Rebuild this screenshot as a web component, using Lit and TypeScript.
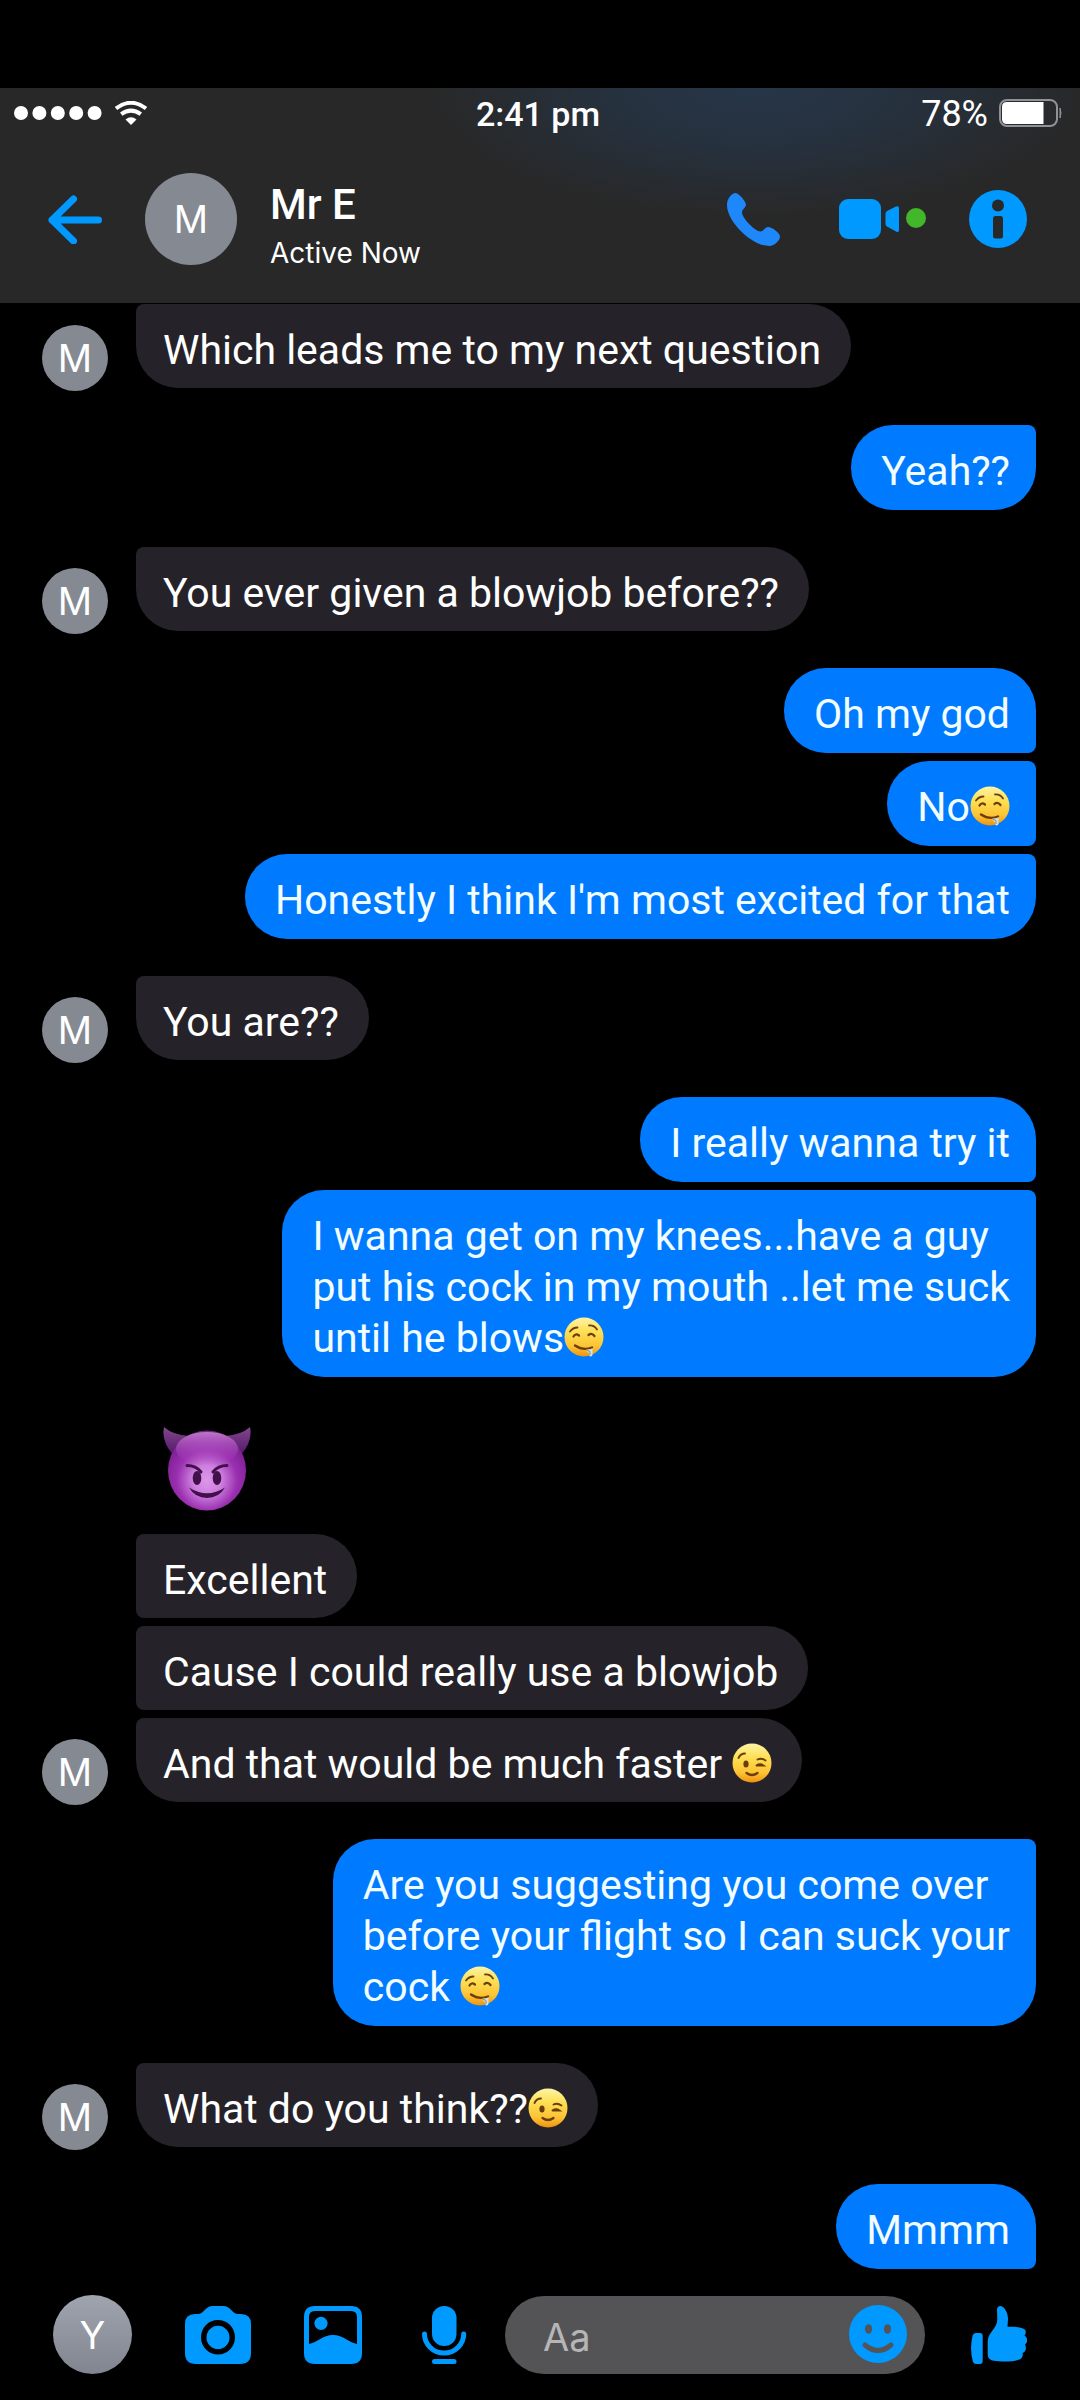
import { LitElement, html, css, svg, nothing, type TemplateResult } from "lit";
import { customElement, property } from "lit/decorators.js";
import { classMap } from "lit/directives/class-map.js";

type Part = string | { emoji: "drool" | "wink" | "devil" };
interface Message {
  lines: Part[][];
  shape?: "first" | "middle" | "last" | "bare";
}
interface Group {
  from: "them" | "me";
  messages: Message[];
}

const drool: Part = { emoji: "drool" };
const wink: Part = { emoji: "wink" };

const conversation: Group[] = [
  { from: "them", messages: [{ lines: [["Which leads me to my next question"]], shape: "last" }] },
  { from: "me", messages: [{ lines: [["Yeah??"]], shape: "last" }] },
  { from: "them", messages: [{ lines: [["You ever given a blowjob before??"]], shape: "last" }] },
  {
    from: "me",
    messages: [
      { lines: [["Oh my god"]], shape: "first" },
      { lines: [["No", drool]], shape: "middle" },
      { lines: [["Honestly I think I'm most excited for that"]], shape: "last" },
    ],
  },
  { from: "them", messages: [{ lines: [["You are??"]], shape: "last" }] },
  {
    from: "me",
    messages: [
      { lines: [["I really wanna try it"]], shape: "first" },
      {
        lines: [
          ["I wanna get on my knees...have a guy"],
          ["put his cock in my mouth ..let me suck"],
          ["until he blows", drool],
        ],
        shape: "last",
      },
    ],
  },
  {
    from: "them",
    messages: [
      { lines: [[{ emoji: "devil" }]], shape: "bare" },
      { lines: [["Excellent"]], shape: "middle" },
      { lines: [["Cause I could really use a blowjob"]], shape: "middle" },
      { lines: [["And that would be much faster ", wink]], shape: "last" },
    ],
  },
  {
    from: "me",
    messages: [
      {
        lines: [
          ["Are you suggesting you come over"],
          ["before your flight so I can suck your"],
          ["cock ", drool],
        ],
        shape: "last",
      },
    ],
  },
  { from: "them", messages: [{ lines: [["What do you think??", wink]], shape: "last" }] },
  { from: "me", messages: [{ lines: [["Mmmm"]], shape: "first" }] },
];

const faceGradient = svg`
  <defs>
    <linearGradient id="face" x1="0" y1="0" x2="0" y2="1">
      <stop offset="0" stop-color="#fff3a6" />
      <stop offset="0.35" stop-color="#fde055" />
      <stop offset="0.75" stop-color="#fcc233" />
      <stop offset="1" stop-color="#ee930f" />
    </linearGradient>
  </defs>
  <circle cx="20" cy="20" r="19.5" fill="url(#face)" />`;

const droolFace = html`<svg class="emoji" viewBox="0 0 40 40" role="img" aria-label="Drooling face">
  ${faceGradient}
  <g fill="none" stroke="#6b3d0c" stroke-width="1.8" stroke-linecap="round">
    <path d="M6 14.5Q9 10.5 13.5 10.5" />
    <path d="M25 8.5Q30 8 33 12.5" />
    <path d="M9.5 19.5Q11.5 16 15 18.5" stroke-width="2.2" />
    <path d="M24.5 18Q28 15.5 30.5 19" stroke-width="2.2" />
    <path d="M11 28.5Q19 34 28 30.5" stroke-width="2.4" />
  </g>
  <path d="M22.5 32.5Q27 33 28.5 31V37.5Q28.5 39.5 26.5 39.5Q25 39.5 25.2 36.5Q23 35 22.5 32.5Z" fill="#d3e3e4" />
  <path d="M23 33.2L26 34.5V38" fill="none" stroke="#7f8c83" stroke-width="1" />
</svg>`;

const winkFace = html`<svg class="emoji" viewBox="0 0 40 40" role="img" aria-label="Winking face">
  ${faceGradient}
  <g fill="none" stroke="#6b3d0c" stroke-width="1.9" stroke-linecap="round">
    <path d="M6.5 15Q8.5 10.5 13 10.5" />
    <path d="M25.5 16.5Q29.5 14.5 33.5 17.5" />
    <path d="M24.5 22.5Q28 20 31.5 22.5H25.5" />
    <path d="M14.5 30Q20 34 25.5 30" stroke-width="2.3" />
  </g>
  <ellipse cx="14" cy="21" rx="2.6" ry="3.5" fill="#6b3d0c" />
</svg>`;

const devilFace = html`<svg class="devil" viewBox="0 0 88 84" role="img" aria-label="Smiling face with horns">
  <defs>
    <radialGradient id="devil-skin" cx="0.5" cy="0.62" r="0.62">
      <stop offset="0" stop-color="#dc97ea" />
      <stop offset="0.3" stop-color="#ce80df" />
      <stop offset="0.62" stop-color="#9a30b0" />
      <stop offset="0.85" stop-color="#85239b" />
      <stop offset="1" stop-color="#6c2a7c" />
    </radialGradient>
    <linearGradient id="devil-shine" x1="0" y1="0" x2="0" y2="1">
      <stop offset="0" stop-color="#bd74cb" />
      <stop offset="1" stop-color="#a238b8" stop-opacity="0" />
    </linearGradient>
    <linearGradient id="horn" x1="0" y1="0" x2="0" y2="1">
      <stop offset="0" stop-color="#81478c" />
      <stop offset="1" stop-color="#55166a" />
    </linearGradient>
  </defs>
  <path d="M1 0Q10 8 26 9L10 28Q-2 14 1 0ZM87 0Q78 8 62 9L78 28Q90 14 87 0Z" fill="url(#horn)" />
  <ellipse cx="44" cy="43.5" rx="39" ry="40" fill="url(#devil-skin)" />
  <ellipse cx="44" cy="22" rx="31" ry="17" fill="url(#devil-shine)" />
  <g fill="none" stroke="#43104b" stroke-linecap="round">
    <path d="M24 38.5Q33 38.5 38 45" stroke-width="3" />
    <path d="M64 38.5Q55 38.5 50 45" stroke-width="3" />
  </g>
  <ellipse cx="34" cy="51" rx="4.3" ry="7" fill="#43104b" />
  <ellipse cx="54" cy="51" rx="4.3" ry="7" fill="#43104b" />
  <path d="M26 60.5Q44 72 62 60.5Q56 71 44 71Q32 71 26 60.5Z" fill="#43104b" />
</svg>`;

const emojiArt: Record<string, TemplateResult> = { drool: droolFace, wink: winkFace, devil: devilFace };

@customElement("chat-avatar")
export class ChatAvatar extends LitElement {
  static styles = css`
    :host {
      display: flex;
      flex: none;
      align-items: center;
      justify-content: center;
      border-radius: 50%;
      background: #858992;
      color: #fff;
      font: 400 38px/44px Inter, "Liberation Sans", sans-serif;
    }
  `;
  @property() initial = "";
  render() {
    return html`<span>${this.initial}</span>`;
  }
}

@customElement("chat-bubble")
export class ChatBubble extends LitElement {
  static styles = css`
    :host {
      display: block;
    }
    .bubble {
      box-sizing: border-box;
      width: fit-content;
      border-radius: 42px;
      font: 400 41px/50px Roboto, "Liberation Sans", sans-serif;
      white-space: nowrap;
    }
    .line {
      display: block;
      white-space: pre;
    }
    .them {
      padding: 21px 30px 13px 27px;
      background: #252329;
      color: #fff;
    }
    .me {
      padding: 21px 26px 13px 30px;
      background: #007aff;
      color: #f2fdff;
      line-height: 51px;
    }
    .them.last { border-top-left-radius: 8px; }
    .them.middle { border-top-left-radius: 8px; border-bottom-left-radius: 8px; }
    .me.last { border-top-right-radius: 8px; }
    .me.middle { border-top-right-radius: 8px; border-bottom-right-radius: 8px; }
    .me.first { border-bottom-right-radius: 8px; }
    .them.bare {
      padding: 13px 27px 15px;
      background: none;
    }
    .emoji {
      width: 40px;
      height: 40px;
      vertical-align: -5px;
    }
    .devil {
      display: block;
      width: 88px;
      height: 84px;
    }
  `;
  @property() from: "them" | "me" = "them";
  @property({ attribute: false }) message: Message = { lines: [] };
  render() {
    const classes = { bubble: true, [this.from]: true, [this.message.shape ?? "last"]: true };
    return html`<div class=${classMap(classes)}>${this.message.lines.map(
      (line) => html`<span class="line">${line.map((p) => (typeof p === "string" ? p : emojiArt[p.emoji]))}</span>`
    )}</div>`;
  }
}

@customElement("chat-header")
export class ChatHeader extends LitElement {
  static styles = css`
    :host {
      display: block;
      background:
        radial-gradient(ellipse 330px 130px at 70% 0, #263648 0%, #26313e 45%, rgba(40, 40, 40, 0) 100%),
        #282828;
      color: #fff;
      font-family: Roboto, "Liberation Sans", sans-serif;
    }
    .status {
      display: grid;
      grid-template-columns: 1fr auto 1fr;
      align-items: center;
      height: 50px;
      padding: 0 18px 0 14px;
      font-size: 36px;
      line-height: 42px;
    }
    .signal {
      display: flex;
      align-items: center;
      gap: 13px;
    }
    .dots {
      width: 88px;
      height: 14px;
    }
    .wifi {
      width: 32px;
      height: 24px;
    }
    .time {
      padding-top: 2px;
      font-size: 34px;
      font-weight: 500;
    }
    .power {
      display: flex;
      align-items: center;
      justify-content: flex-end;
      gap: 11px;
    }
    .percent {
      padding-top: 2px;
    }
    .battery {
      width: 63px;
      height: 28px;
    }
    .bar {
      display: flex;
      align-items: center;
      height: 162px;
      padding: 0 53px 3px 48px;
    }
    button {
      display: block;
      flex: none;
      margin: 0;
      padding: 0;
      border: 0;
      background: none;
    }
    svg {
      display: block;
    }
    .arrow {
      width: 54px;
      height: 50px;
    }
    .avatar {
      width: 92px;
      height: 92px;
      margin: 0 33px 0 43px;
    }
    .who {
      flex: 1;
      min-width: 0;
      padding-top: 16px;
    }
    .name {
      margin: 0;
      font-size: 42px;
      font-weight: 500;
      line-height: 52px;
    }
    .presence {
      margin: 0;
      font-family: Inter, "Liberation Sans", sans-serif;
      font-size: 28px;
      line-height: 44px;
    }
    .actions {
      display: flex;
      align-items: center;
    }
    .phone {
      width: 53px;
      height: 53px;
      margin-right: 59px;
    }
    .video {
      width: 87px;
      height: 40px;
      margin-right: 43px;
    }
    .info {
      width: 58px;
      height: 58px;
    }
  `;
  render() {
    return html`
      <div class="status">
        <div class="signal">
          <svg class="dots" viewBox="0 0 88 14" role="img" aria-label="Full signal" fill="#fff">
            ${[7, 25.4, 43.8, 62.2, 80.6].map((x) => svg`<circle cx=${x} cy="7" r="7" />`)}
          </svg>
          <svg class="wifi" viewBox="0 0 32 24" role="img" aria-label="Wi-Fi" fill="none" stroke="#fff" stroke-width="4">
            <path d="M1 7.5Q16 -4 31 7.5" />
            <path d="M6.2 13.2Q16 6 25.8 13.2" />
            <path d="M16 24L10.5 18.5Q16 14 21.5 18.5Z" fill="#fff" stroke="none" />
          </svg>
        </div>
        <span class="time">2:41 pm</span>
        <div class="power">
          <span class="percent">78%</span>
          <svg class="battery" viewBox="0 0 63 28" role="img" aria-label="Battery">
            <rect x="1" y="1" width="57" height="26" rx="7" fill="none" stroke="#8f9296" stroke-width="2" />
            <path d="M8 3H44.5V25H8Q3 25 3 20V8Q3 3 8 3Z" fill="#fff" />
            <path d="M61 9Q63 14 61 19Z" fill="#8f9296" stroke="#8f9296" />
          </svg>
        </div>
      </div>
      <div class="bar">
        <button type="button" aria-label="Back">
          <svg class="arrow" viewBox="0 0 54 50" fill="none" stroke="#0099ff" stroke-width="7" stroke-linecap="round" stroke-linejoin="round">
            <path d="M50.5 26H4M25.5 5L4 26L25.5 47" />
          </svg>
        </button>
        <chat-avatar class="avatar" initial="M"></chat-avatar>
        <div class="who">
          <h1 class="name">Mr E</h1>
          <p class="presence">Active Now</p>
        </div>
        <div class="actions">
          <button type="button" class="phone" aria-label="Call">
            <svg viewBox="0 0 53 53" fill="#1e88fb">
              <path d="M0 12C0 5 5 0 8.6 0C12 0 19 9 19 11.5C19 14.5 15 16 15 19.5C15 25 28 38.5 33.5 38.5C36.5 38.5 38 34 41 34C45 34 53 40 53 43.5C53 47 48 53 42 53C25 53 0 29 0 12Z" />
            </svg>
          </button>
          <button type="button" class="video" aria-label="Video call">
            <svg viewBox="0 0 87 40" fill="#0099ff">
              <rect width="42" height="40" rx="9" />
              <path d="M46.5 15Q46.5 13 48 12L57 7.5Q60 6.5 60 9V31Q60 34 57 32.5L48 27.5Q46.5 26.5 46.5 25Z" />
              <circle cx="77" cy="19" r="10" fill="#42b72a" />
            </svg>
          </button>
          <button type="button" class="info" aria-label="Conversation details">
            <svg viewBox="0 0 58 58">
              <circle cx="29" cy="29" r="29" fill="#0099ff" />
              <circle cx="29" cy="15.5" r="6" fill="#282828" />
              <rect x="24" y="26" width="10" height="22.5" rx="2.5" fill="#282828" />
            </svg>
          </button>
        </div>
      </div>
    `;
  }
}

@customElement("chat-composer")
export class ChatComposer extends LitElement {
  static styles = css`
    :host {
      display: flex;
      align-items: center;
      padding: 26px 53px;
    }
    .avatar {
      width: 79px;
      height: 79px;
      background: linear-gradient(#a0a4ae, #81858f);
    }
    button {
      display: block;
      flex: none;
      margin: 0;
      padding: 0;
      border: 0;
      background: none;
      height: 58px;
    }
    svg {
      display: block;
    }
    .tools {
      display: flex;
      gap: 53px;
      margin: 0 32px 0 53px;
    }
    .camera { width: 66px; }
    .photo, .mic, .smile { width: 58px; }
    .like { width: 56px; margin-left: 46px; }
    .field {
      display: flex;
      flex: 1;
      align-items: center;
      min-width: 0;
      height: 78px;
      box-sizing: border-box;
      padding: 0 18px 2px 38px;
      border-radius: 39px;
      background: #545456;
    }
    .text {
      flex: 1;
      width: 0;
      min-width: 0;
      height: 50px;
      margin: 6px 0 0;
      padding: 0;
      border: 0;
      outline: 0;
      background: none;
      color: #fff;
      font: 400 38px/50px Inter, "Liberation Sans", sans-serif;
    }
    .text::placeholder {
      color: #b6b6b6;
      opacity: 1;
    }
  `;
  render() {
    return html`
      <chat-avatar class="avatar" initial="Y"></chat-avatar>
      <div class="tools">
        <button type="button" class="camera" aria-label="Camera">
          <svg viewBox="0 0 66 58" fill="#0099ff">
            <path fill-rule="evenodd" d="M10 8H13C19 8 20 0 28 0H38C46 0 47 8 53 8H56Q66 8 66 18V47Q66 58 55 58H11Q0 58 0 47V18Q0 8 10 8ZM33 14A17 17.3 0 1 0 33 48.6A17 17.3 0 1 0 33 14ZM33 19.7A11.5 11.7 0 1 1 33 43.1A11.5 11.7 0 1 1 33 19.7Z" />
          </svg>
        </button>
        <button type="button" class="photo" aria-label="Photos">
          <svg viewBox="0 0 58 58" fill="#0099ff">
            <path fill-rule="evenodd" d="M11 0H47Q58 0 58 11V47Q58 58 47 58H11Q0 58 0 47V11Q0 0 11 0ZM11 5Q5 5 5 11V38C12 37 19 29 29 29C39 29 46 37 53 38V11Q53 5 47 5Z" />
            <circle cx="17" cy="17.3" r="6.6" />
          </svg>
        </button>
        <button type="button" class="mic" aria-label="Voice message">
          <svg viewBox="0 0 58 58" fill="#0099ff">
            <rect x="17" width="24.5" height="40" rx="12" />
            <path d="M9.5 28A19.6 19 0 0 0 48.7 28" fill="none" stroke="#0099ff" stroke-width="5" stroke-linecap="round" />
            <rect x="17" y="53" width="24.5" height="5" rx="2.5" />
          </svg>
        </button>
      </div>
      <div class="field">
        <input class="text" type="text" placeholder="Aa" aria-label="Message" />
        <button type="button" class="smile" aria-label="Emoji">
          <svg viewBox="0 0 58 58">
            <circle cx="29" cy="29" r="29" fill="#0099ff" />
            <ellipse cx="19.5" cy="24" rx="3.6" ry="4.8" fill="#545456" />
            <ellipse cx="38.5" cy="24" rx="3.6" ry="4.8" fill="#545456" />
            <path d="M16 40Q29 51 42 40" fill="none" stroke="#545456" stroke-width="5" stroke-linecap="round" />
          </svg>
        </button>
      </div>
      <button type="button" class="like" aria-label="Send a like">
        <svg viewBox="0 0 56 58" fill="#0099ff">
          <path d="M5 27H9Q11.7 27 11.7 30V55Q11.7 58 9 58H5Q2.5 58 1.7 55Q-1.5 43 1.5 30Q2.3 27 5 27Z" />
          <path d="M26 4Q26 0 29.5 0C34 1 37 7 37 13L36.5 20.8C45 20.6 55 21 54.8 26Q54.8 28 53.5 29.5C57 32 57 36.5 54 38.6C56 42 54.5 46 51.6 47C52.5 50 50.5 53.5 47.5 53.8C42 56 30 56 23 54.8C18.5 54 16.7 52 16.7 48V36C16.7 26 26.3 23 26.3 13Z" />
        </svg>
      </button>
    `;
  }
}

@customElement("app-root")
export class AppRoot extends LitElement {
  static styles = css`
    :host {
      display: flex;
      flex-direction: column;
      box-sizing: border-box;
      min-height: 100vh;
      padding-top: 88px;
      background: #000;
    }
    .thread {
      display: flex;
      flex: 1;
      flex-direction: column;
      gap: 37px;
      padding: 1px 44px 0 42px;
    }
    .group {
      display: flex;
      align-items: flex-end;
    }
    .stack {
      display: flex;
      flex: 1;
      flex-direction: column;
      gap: 8px;
    }
    .me .stack {
      align-items: flex-end;
    }
    .avatar {
      width: 66px;
      height: 66px;
      margin: 0 28px -3px 0;
    }
  `;
  render() {
    return html`
      <chat-header></chat-header>
      <main class="thread">
        ${conversation.map(
          (g) => html`<section class=${classMap({ group: true, [g.from]: true })}>
            ${g.from === "them" ? html`<chat-avatar class="avatar" initial="M"></chat-avatar>` : nothing}
            <div class="stack">
              ${g.messages.map((m) => html`<chat-bubble .from=${g.from} .message=${m}></chat-bubble>`)}
            </div>
          </section>`
        )}
      </main>
      <chat-composer></chat-composer>
    `;
  }
}
